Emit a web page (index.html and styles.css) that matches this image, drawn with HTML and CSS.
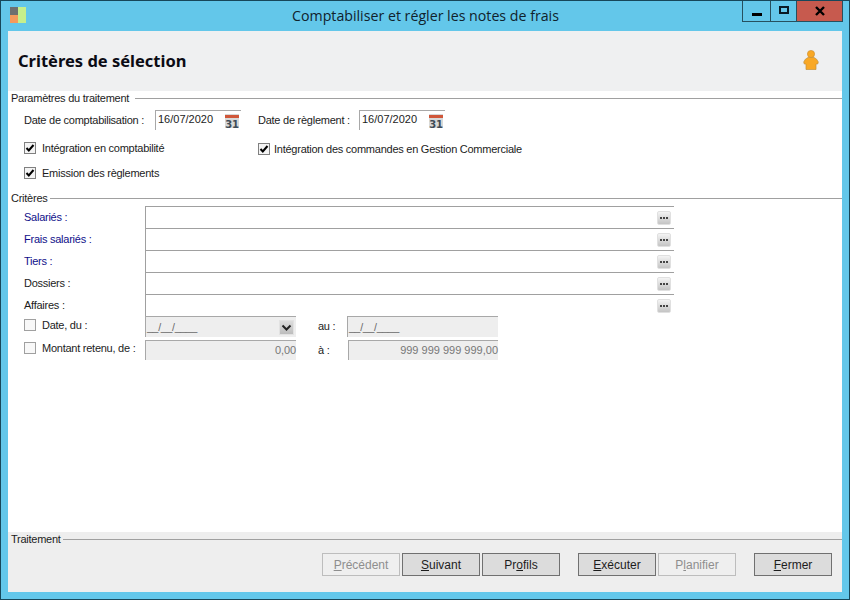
FILE: index.html
```html
<!DOCTYPE html>
<html lang="fr">
<head>
<meta charset="utf-8">
<title>Comptabiliser et régler les notes de frais</title>
<link rel="stylesheet" href="styles.css">
</head>
<body>
<div class="window">
  <header class="titlebar">
    <svg class="app-icon" width="16" height="16" viewBox="0 0 16 16"><rect width="8" height="8" fill="#6f6f6f"/><rect y="8" width="8" height="8" fill="#f59a5c"/><rect x="8" width="8" height="16" fill="#c6ef8c"/></svg>
    <div class="title">Comptabiliser et régler les notes de frais</div>
    <div class="controls">
      <div class="ctl ctl-min"><svg width="12" height="12" viewBox="0 0 12 12"><rect x="1" y="8" width="10" height="3" fill="#000"/></svg></div>
      <div class="ctl ctl-max"><svg width="12" height="12" viewBox="0 0 12 12"><path fill-rule="evenodd" d="M1 1h10v8H1zM3 3v4h6V3z" fill="#0a1a24"/></svg></div>
      <div class="ctl ctl-close"><svg width="12" height="12" viewBox="0 0 12 12"><path d="M2 2l8 8M10 2l-8 8" stroke="#000" stroke-width="2.400" fill="none"/></svg></div>
    </div>
  </header>
  <div class="client">
    <div class="page-head">
      <h1>Critères de sélection</h1>
      <svg class="user-icon" width="16" height="20" viewBox="0 0 16 20"><circle cx="8" cy="4" r="3.600" fill="#f9a825" stroke="#c98a2a" stroke-width=".6"/><path d="M5 7.500h6q3 1 4.300 4.500l-.6 2H13v5.500H3V14H1.300l-.6-2Q2 8.500 5 7.500z" fill="#f9a825" stroke="#c4913a" stroke-width=".7"/></svg>
    </div>
    <main class="content">
      <div class="legend"><span class="legend-text legend-wide">Paramètres du traitement</span></div>
      <div class="date-row">
        <label class="lbl-date1">Date de comptabilisation :</label>
        <div class="date-field"><span class="date-value">16/07/2020</span>
          <svg class="cal" width="14" height="14" viewBox="0 0 14 14"><rect width="14" height="14" fill="#d8d9d9"/><rect y="1" width="14" height="3" fill="#d0573a"/><text x="7" y="13.500" text-anchor="middle" class="cal-num">31</text></svg>
        </div>
        <label class="lbl-date2">Date de règlement :</label>
        <div class="date-field"><span class="date-value">16/07/2020</span>
          <svg class="cal" width="14" height="14" viewBox="0 0 14 14"><rect width="14" height="14" fill="#d8d9d9"/><rect y="1" width="14" height="3" fill="#d0573a"/><text x="7" y="13.500" text-anchor="middle" class="cal-num">31</text></svg>
        </div>
      </div>
      <div class="check-row">
        <div class="check"><span class="box"><svg width="10" height="10" viewBox="0 0 10 10"><path d="M1.500 5l2.300 2.500L8.500 2" stroke="#000" stroke-width="2" fill="none"/></svg></span>Intégration en comptabilité</div>
        <div class="check check-low"><span class="box"><svg width="10" height="10" viewBox="0 0 10 10"><path d="M1.500 5l2.300 2.500L8.500 2" stroke="#000" stroke-width="2" fill="none"/></svg></span>Intégration des commandes en Gestion Commerciale</div>
      </div>
      <div class="check-row">
        <div class="check"><span class="box"><svg width="10" height="10" viewBox="0 0 10 10"><path d="M1.500 5l2.300 2.500L8.500 2" stroke="#000" stroke-width="2" fill="none"/></svg></span>Emission des règlements</div>
      </div>
      <div class="legend legend-criteria"><span class="legend-text">Critères</span></div>
      <div class="criteria">
        <div class="crit-row"><label class="crit-label link">Salariés :</label><div class="text-field"><span class="dots"></span></div></div>
        <div class="crit-row"><label class="crit-label link">Frais salariés :</label><div class="text-field"><span class="dots"></span></div></div>
        <div class="crit-row"><label class="crit-label link">Tiers :</label><div class="text-field"><span class="dots"></span></div></div>
        <div class="crit-row"><label class="crit-label">Dossiers :</label><div class="text-field"><span class="dots"></span></div></div>
        <div class="crit-row"><label class="crit-label">Affaires :</label><div class="text-field"><span class="dots"></span></div></div>
        <div class="crit-row">
          <div class="crit-label check check-date"><span class="box box-off"></span>Date, du :</div>
          <div class="off-field off-date"><span class="mask">__/__/____</span><span class="drop"><svg width="11" height="8" viewBox="0 0 11 8"><path d="M1.500 1.500l4 4 4-4" stroke="#222" stroke-width="2" fill="none"/></svg></span></div>
          <label class="to-label">au :</label>
          <div class="off-field off-date"><span class="mask">__/__/____</span></div>
        </div>
        <div class="crit-row">
          <div class="crit-label check check-amount"><span class="box box-off"></span>Montant retenu, de :</div>
          <div class="off-field off-amount">0,00</div>
          <label class="to-label to-label-wide">à :</label>
          <div class="off-field off-amount off-amount-narrow">999 999 999 999,00</div>
        </div>
      </div>
    </main>
    <footer class="footer">
      <div class="legend"><span class="legend-text">Traitement</span></div>
      <div class="buttons">
        <button class="btn" disabled><u>P</u>récédent</button>
        <button class="btn"><u>S</u>uivant</button>
        <button class="btn">Pr<u>o</u>fils</button>
        <button class="btn btn-gap"><u>E</u>xécuter</button>
        <button class="btn" disabled>P<u>l</u>anifier</button>
        <button class="btn btn-gap"><u>F</u>ermer</button>
      </div>
    </footer>
  </div>
</div>
</body>
</html>
```
FILE: styles.css
```css
* { box-sizing: border-box; }
html, body { margin: 0; padding: 0; }
body {
  width: 850px;
  height: 600px;
  overflow: hidden;
  font-family: "Liberation Sans", Arial, sans-serif;
  font-size: 11px;
  letter-spacing: -0.25px;
  color: #1c1c1c;
}
.window {
  width: 850px;
  height: 600px;
  display: flex;
  flex-direction: column;
  background: #63c7ea;
  border: 1px solid #17475a;
  padding: 0 7px 7px;
}
.titlebar {
  height: 30px;
  flex: none;
  display: grid;
  grid-template-columns: 1fr auto 1fr;
  margin: 0 -1px 0 0;
}
.app-icon { margin: 6px 0 0 2px; }
.title {
  font-family: "Open Sans", sans-serif;
  font-size: 14.2px;
  letter-spacing: 0;
  line-height: 30px;
  color: #10222c;
}
.controls {
  justify-self: end;
  display: flex;
  height: 21px;
  border: 1px solid #26505f;
  border-top: 0;
}
.ctl {
  display: flex;
  align-items: center;
  justify-content: center;
  width: 28px;
}
.ctl-min, .ctl-max { border-right: 1px solid #26505f; }
.ctl-max { width: 26px; }
.ctl-close { width: 45px; background: #c75a4e; }
.client {
  flex: 1;
  display: flex;
  flex-direction: column;
  background: #fff;
}
.page-head {
  height: 60px;
  flex: none;
  display: flex;
  align-items: center;
  justify-content: space-between;
  padding: 0 23px 0 10px;
  background: #eff0f1;
}
.user-icon { margin-top: -2px; }
h1 {
  margin: 0 0 2px;
  font-family: "Noto Sans", sans-serif;
  font-size: 16.5px;
  letter-spacing: 0;
  font-weight: 700;
  color: #0b0b14;
}
.content { flex: 1; }
.legend {
  height: 14px;
  display: flex;
  align-items: center;
  padding-left: 3px;
  line-height: 14px;
}
.legend::after {
  content: "";
  flex: 1;
  height: 1px;
  background: #a0a0a0;
}
.legend-text { padding-right: 2px; }
.legend-wide { padding-right: 6px; }
.legend-criteria { margin-top: 11px; }
.date-row {
  display: flex;
  align-items: center;
  margin-top: 5px;
  padding-left: 16px;
}
.lbl-date1 { width: 131px; }
.lbl-date2 { width: 101px; margin-left: 17px; }
.date-field {
  width: 86px;
  height: 20px;
  display: flex;
  justify-content: space-between;
  border-top: 1px solid #a8a8a8;
  border-left: 1px solid #a8a8a8;
  padding: 2px 2px 0 2px;
}
.date-value { letter-spacing: 0; }
.cal { margin-top: 1px; }
.cal-num {
  font-family: "DejaVu Sans", sans-serif;
  font-size: 10px;
  letter-spacing: -0.3px;
  font-weight: 700;
  fill: #3f4c57;
}
.check-row {
  display: grid;
  grid-template-columns: 234px auto;
  margin-top: 11px;
  padding-left: 16px;
  height: 14px;
}
.check {
  display: flex;
  align-items: center;
  gap: 6px;
}
.check-low { position: relative; top: 1px; gap: 4px; }
.box {
  width: 12px;
  height: 12px;
  flex: none;
  display: flex;
  align-items: center;
  justify-content: center;
  background: #f4f4f4;
  border: 1px solid #808080;
}
.box-off { background: #f8f8f8; border-color: #a0a0a0; }
.criteria { margin-top: 1px; padding-left: 16px; }
.crit-row {
  display: flex;
  height: 22px;
}
.crit-label {
  width: 121px;
  flex: none;
  padding-top: 4px;
  line-height: 15px;
}
.check-date, .check-amount { align-items: flex-start; }
.check-date { padding-top: 2px; }
.check-amount { padding-top: 3px; }
.check-date .box, .check-amount .box { margin-top: 1px; }
.link { color: #10108a; }
.text-field {
  width: 529px;
  height: 22px;
  display: flex;
  align-items: center;
  justify-content: flex-end;
  padding: 1px 3px 0 0;
  border-top: 1px solid #a0a0a0;
  border-left: 1px solid #a0a0a0;
}
.dots {
  width: 14px;
  height: 14px;
  display: flex;
  align-items: center;
  justify-content: center;
  border: 1px solid #e0e0e0;
  border-radius: 2px;
  background: linear-gradient(#f4f4f4, #c4c4c4);
}
.dots::before {
  content: "";
  width: 8px;
  height: 2px;
  background: repeating-linear-gradient(90deg, #444 0 2px, transparent 2px 3px);
}
.off-field {
  background: #eee;
  border-top: 1px solid #a8a8a8;
  border-left: 1px solid #a8a8a8;
  color: #777;
}
.off-date {
  width: 151px;
  height: 21px;
  display: flex;
  justify-content: space-between;
  padding: 2px 2px 0 1px;
}
.mask { color: #666; font-size: 10.5px; line-height: 17px; }
.drop {
  width: 15px;
  height: 15px;
  display: flex;
  align-items: center;
  justify-content: center;
  margin-top: 1px;
  background: linear-gradient(#dcdcdc, #bdbdbd);
  border: 1px solid #e2e2e2;
}
.to-label {
  width: 51px;
  flex: none;
  padding: 3px 0 0 22px;
  line-height: 15px;
}
.to-label-wide { width: 52px; padding-top: 5px; }
.off-amount {
  width: 151px;
  height: 20px;
  margin-top: 2px;
  padding-top: 2px;
  line-height: 15px;
  letter-spacing: -0.1px;
  text-align: right;
}
.off-amount-narrow { width: 150px; letter-spacing: 0; }
.footer {
  height: 60px;
  flex: none;
  background: #eeeeee;
}
.buttons {
  display: flex;
  gap: 2px;
  justify-content: flex-end;
  margin-top: 7px;
  padding-right: 10px;
}
.btn {
  width: 78px;
  height: 23px;
  padding: 0;
  font-family: "Liberation Sans", Arial, sans-serif;
  font-size: 12px;
  color: #1c1c1c;
  background: #dcdcdc;
  border: 1px solid #707070;
}
.btn:disabled {
  color: #8e8e8e;
  background: #efefef;
  border-color: #bdbdbd;
}
.btn-gap { margin-left: 16px; }
```
